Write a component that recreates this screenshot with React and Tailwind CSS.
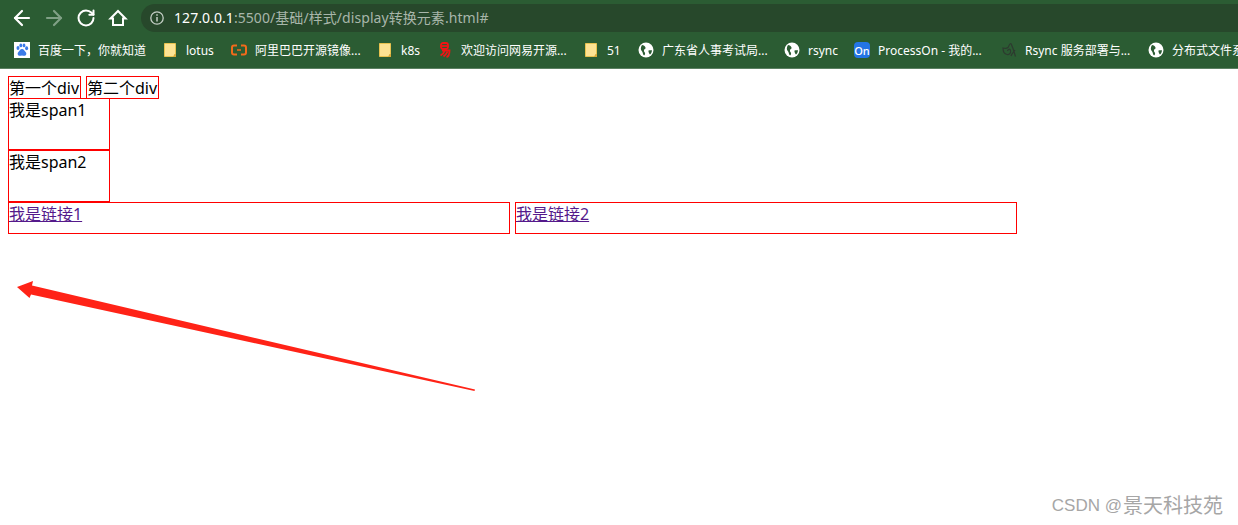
import { ArrowLeft, ArrowRight, RotateCw } from 'lucide-react'

const BOOKMARKS = [
  { icon: 'baidu', label: '百度一下，你就知道', width: 'w-[108px]' },
  { icon: 'folder', label: 'lotus', width: 'w-[29px]' },
  { icon: 'aliyun', label: '阿里巴巴开源镜像...', width: 'w-[106px]' },
  { icon: 'folder', label: 'k8s', width: 'w-[20px]' },
  { icon: 'netease', label: '欢迎访问网易开源...', width: 'w-[106px]' },
  { icon: 'folder', label: '51', width: 'w-[15px]' },
  { icon: 'globe', label: '广东省人事考试局...', width: 'w-[106px]' },
  { icon: 'globe', label: 'rsync', width: 'w-[30px]' },
  { icon: 'on', label: 'ProcessOn - 我的...', width: 'w-[107px]' },
  { icon: 'rsync', label: 'Rsync 服务部署与...', width: 'w-[107px]' },
  { icon: 'globe', label: '分布式文件系统', width: 'w-[90px]' },
]

const BookmarkIcon = ({ type }) => {
  if (type === 'folder') {
    return (
      <svg className="w-4 h-4 shrink-0" viewBox="0 0 16 16">
        <path d="M2.500 1.500h11v13h-11z" fill="#fde293" stroke="#e8c24f" />
        <path d="M11 15h3v-3h-1.500z" fill="#d9a93a" />
      </svg>
    )
  }
  if (type === 'baidu') {
    return (
      <svg className="w-4 h-4 shrink-0" viewBox="0 0 16 16">
        <rect width="16" height="16" fill="#fff" />
        <g fill="#3b7be8">
          <ellipse cx="4" cy="6" rx="1.500" ry="2" />
          <ellipse cx="6.800" cy="3.400" rx="1.400" ry="1.900" />
          <ellipse cx="10" cy="3.400" rx="1.400" ry="1.900" />
          <ellipse cx="12.600" cy="6.200" rx="1.500" ry="2" />
          <path d="M8 7c2 0 2.400 2 3.600 3 1.200 1.200 1 3.600-1.200 3.800-1 .1-1.600-.3-2.400-.3s-1.400.4-2.400.3C3.400 13.600 3.200 11.200 4.400 10 5.600 9 6 7 8 7z" />
        </g>
      </svg>
    )
  }
  if (type === 'aliyun') {
    return (
      <svg className="w-4 h-4 shrink-0" viewBox="0 0 16 16" fill="none" stroke="#f26a1b" strokeWidth="2">
        <path d="M6 3.500H3Q1 3.500 1 5.500v5q0 2 2 2h3" />
        <path d="M10 3.500h3q2 0 2 2v5q0 2-2 2h-3" />
        <path d="M6 8h4" strokeWidth="1.500" />
      </svg>
    )
  }
  if (type === 'netease') {
    return (
      <svg className="w-4 h-4 shrink-0" viewBox="0 0 16 16" fill="none" stroke="#f01414" strokeWidth="1.800">
        <rect x="4" y="1" width="7" height="6" rx="2" />
        <path d="M4 4h7" />
        <path d="M5 8.500h7.500c0 3-.5 6-3 6.500" />
        <path d="M7.500 9c-.5 2-2 3.500-4 4.500M10.500 9.500c-.8 2-2 3.500-4 5" />
      </svg>
    )
  }
  if (type === 'globe') {
    return (
      <svg className="w-4 h-4 shrink-0" viewBox="0 0 16 16">
        <circle cx="8" cy="8" r="7.500" fill="#fff" />
        <path d="M4 3c1.500 0 3 1 3.500 2.500.3 1.200-.8 1.800-1.500 2.200-.3 1.500.5 2.500 1 3 .3 1.500-.3 2.800-1.200 2.600C4.500 12 5 10 3.800 9 2.500 8 2.500 5 4 3z" fill="#2b5c33" />
        <path d="M10.500 8.500c1-.4 2.500-.4 3.500-.2-.2 1.800-.8 3.200-2 4.300-1-.8-1.800-3.300-1.500-4.100z" fill="#2b5c33" />
      </svg>
    )
  }
  if (type === 'on') {
    return (
      <div className="w-4 h-4 shrink-0 rounded-sm bg-[#2475e6] flex items-center justify-center text-white text-[11px] leading-none font-medium">
        On
      </div>
    )
  }
  return (
    <svg className="w-4 h-4 shrink-0" viewBox="0 0 16 16" fill="none" stroke="#2d3a2f" strokeWidth="1.200">
      <path d="M10 1.500c-2 0-2 3-3 4s-3.500 1-5 .5c0 3 1 6 4 6.500s4-2 3.500-4S7 7 6.500 9" />
      <path d="M10 1.500l2 5 2.500 8M14 8c-1 2-3 3-4 6" />
    </svg>
  )
}

const Bookmark = ({ icon, label, width }) => (
  <div className="flex items-center gap-2 shrink-0">
    <BookmarkIcon type={icon} />
    <span className={`${width} pt-0.5 whitespace-nowrap text-[12px] leading-4 text-white`}>{label}</span>
  </div>
)

export default function App() {
  return (
    <div className="relative h-screen overflow-hidden bg-white font-['Noto_Sans','Noto_Sans_CJK_SC',sans-serif]">
      {/* Browser toolbar */}
      <div className="h-[32px] bg-[#2b5c33] flex items-center pl-[10px] pt-1">
        <div className="flex items-center gap-2 text-white">
          <ArrowLeft className="w-6 h-6" strokeWidth={2.2} />
          <ArrowRight className="w-6 h-6 text-[#80a086]" strokeWidth={2.2} />
          <RotateCw className="w-5 h-5 mx-0.5" strokeWidth={2.4} />
          <svg className="w-5 h-5 mx-0.5" viewBox="0 0 20 20" fill="none" stroke="currentColor" strokeWidth="2">
            <path d="M2.500 10.500L10 3l7.500 7.500h-2.500v6.500H5v-6.500z" />
          </svg>
        </div>
        <div className="ml-[11px] flex-1 h-[28px] rounded-l-full bg-[#27482b] flex items-center pl-2">
          <svg className="w-4 h-4" viewBox="0 0 16 16" fill="none" stroke="#c5cfc6" strokeWidth="1.300">
            <circle cx="8" cy="8" r="6.200" />
            <path d="M8 7v4.500" strokeWidth="1.500" />
            <path d="M8 4.300v1.500" strokeWidth="1.500" />
          </svg>
          <span className="ml-[9px] text-[14px] leading-5 tracking-[0.065px] text-[#a8b6aa] whitespace-nowrap">
            <span className="text-white">127.0.0.1</span>:5500/基础/样式/display转换元素.html#
          </span>
        </div>
      </div>

      {/* Bookmarks bar */}
      <div className="h-[37px] bg-[#2b5c33] border-b border-[#5b8062] flex items-center gap-4 pl-[14px] overflow-hidden">
        {BOOKMARKS.map((b, i) => (
          <Bookmark key={i} {...b} />
        ))}
      </div>

      {/* Page body */}
      <div className="pl-2 pt-[7px] text-[16px] leading-[23px] text-black">
        <div className="flex gap-[5px]">
          <div className="h-[23px] w-[73px] border border-[#f00] whitespace-nowrap">第一个div</div>
          <div className="h-[23px] w-[73px] border border-[#f00] whitespace-nowrap">第二个div</div>
        </div>
        <div className="-mt-px w-[102px] h-[52px] border border-[#f00]">我是span1</div>
        <div className="w-[102px] h-[52px] border border-[#f00]">我是span2</div>
        <div className="flex gap-[5px]">
          <a href="#" className="block w-[502px] h-[32px] border border-[#f00] text-[#551a8b] underline">我是链接1</a>
          <a href="#" className="block w-[502px] h-[32px] border border-[#f00] text-[#551a8b] underline">我是链接2</a>
        </div>
      </div>

      {/* Annotation arrow drawn over the page */}
      <svg className="absolute left-0 top-0 w-[1238px] h-[525px] pointer-events-none" viewBox="0 0 1238 525">
        <path d="M17 287L33 281L32 285.500L475 389.600L474.500 391L31 294.500L29.500 298z" fill="#ff2317" />
      </svg>

      {/* Watermark */}
      <div className="absolute right-[15px] bottom-[7px] flex items-center gap-px text-[#a6a6a6] whitespace-nowrap leading-6">
        <span className="text-[17px] font-['Liberation_Sans',sans-serif]">CSDN @</span>
        <span className="text-[20px]">景天科技苑</span>
      </div>
    </div>
  )
}
